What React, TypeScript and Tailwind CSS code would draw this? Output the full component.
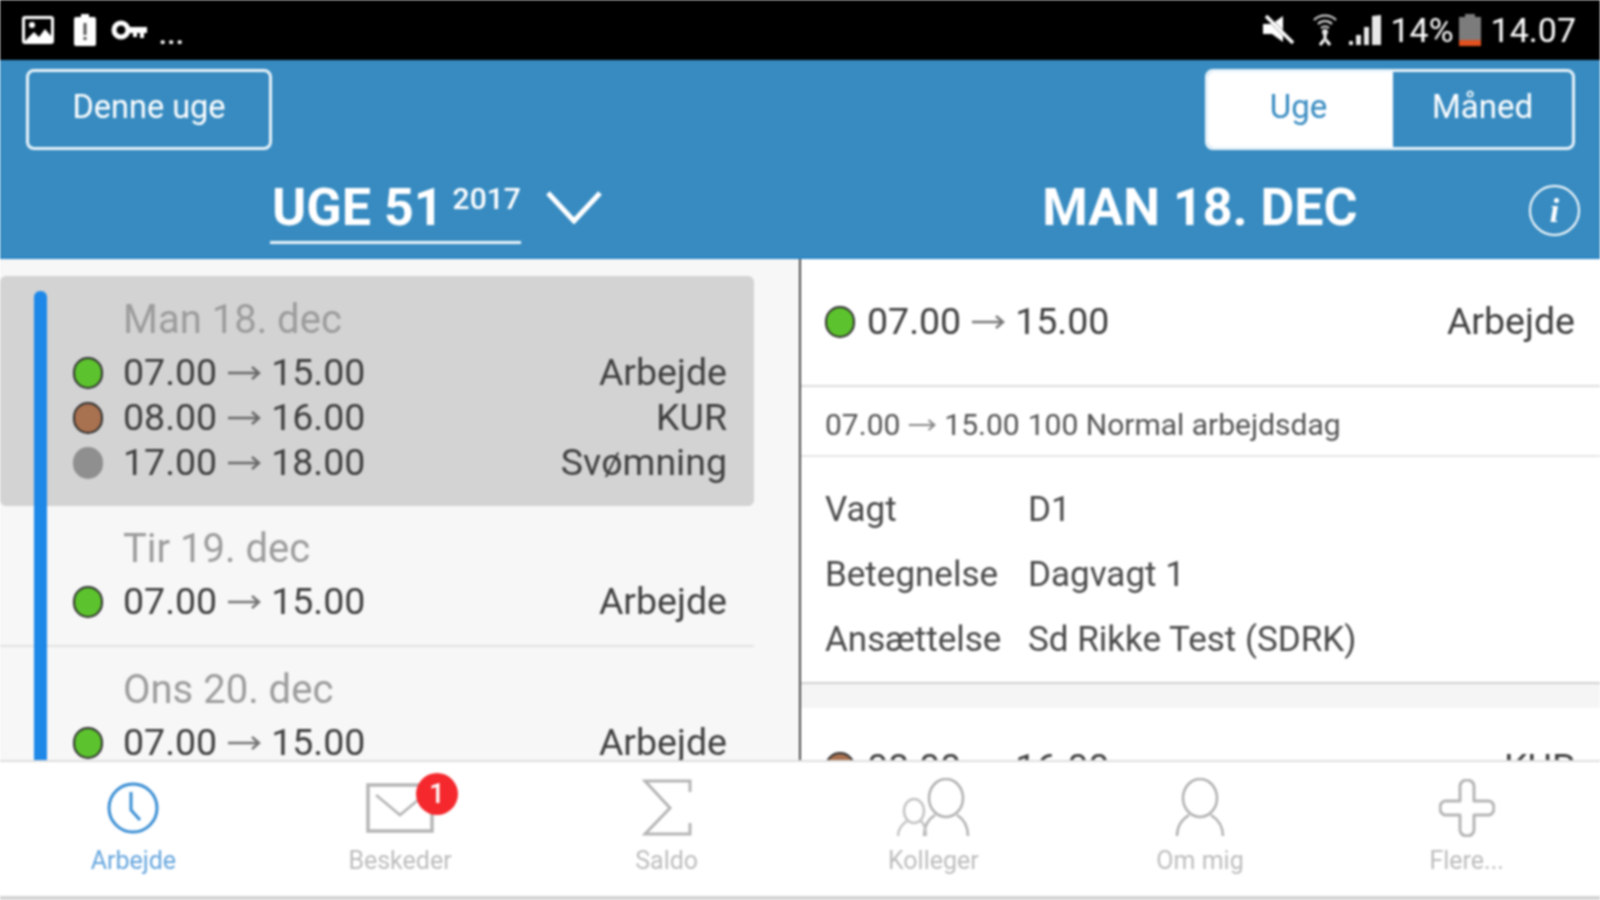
import type { ReactNode } from "react";

function Arrow({ w = 34 }: { w?: number }) {
  return (
    <svg width={w} height="18" viewBox="0 0 34 18" fill="none" stroke="currentColor" strokeWidth="2.5" className="shrink-0 opacity-70">
      <path d="M1 9h31M25 3l7 6-7 6" />
    </svg>
  );
}

function Dot({ color, ring }: { color: string; ring?: boolean }) {
  return (
    <span
      className={`w-[30px] h-[32px] rounded-full shrink-0 ${ring ? "border-2 border-[#2f2f2f]" : ""}`}
      style={{ backgroundColor: color }}
    />
  );
}

function Shift({ dot, ring, from, to, label }: { dot: string; ring?: boolean; from: string; to: string; label: string }) {
  return (
    <div className="flex items-center h-[45px] text-[37.5px] text-[#3f3f3f] leading-none">
      <Dot color={dot} ring={ring} />
      <span className="ml-[20px] flex items-center gap-[10px]">
        {from} <Arrow /> {to}
      </span>
      <span className="ml-auto">{label}</span>
    </div>
  );
}

function Day({ title, selected, last, children }: { title: string; selected?: boolean; last?: boolean; children: ReactNode }) {
  return (
    <div
      className={`flex w-[754px] pl-[34px] ${
        selected ? "bg-[#d3d3d3] rounded-md pt-[15px]" : last ? "" : "border-b-2 border-[#e2e2e2]"
      }`}
    >
      <div className={`w-[13px] bg-[#1e88e8] shrink-0 ${selected ? "rounded-t-md" : last ? "" : "-mb-[2px] relative"}`} />
      <div className="flex-1 pl-[26px] pr-[27px] pb-[21px]">
        <div className={`pl-[50px] text-[40px] text-[#9c9c9c] leading-none ${selected ? "pt-[9px] pb-[10px]" : "pt-[23px] pb-[10px]"}`}>
          {title}
        </div>
        {children}
      </div>
    </div>
  );
}

function Field({ name, value }: { name: string; value: string }) {
  return (
    <div className="flex items-center h-[65px] text-[35px] text-[#4a4a4a] leading-none">
      <span className="w-[203px]">{name}</span>
      <span>{value}</span>
    </div>
  );
}

function Tab({ label, active, children }: { label: string; active?: boolean; children: ReactNode }) {
  return (
    <div className="flex-1 flex flex-col items-center">
      <div className="relative h-[64px] flex items-center justify-center">{children}</div>
      <span className={`mt-[8px] text-[25px] leading-none ${active ? "text-[#66a6de]" : "text-[#bdbdbd]"}`}>{label}</span>
    </div>
  );
}

export default function App() {
  return (
    <div className="w-[1600px] h-[900px] overflow-hidden flex flex-col bg-white font-['Roboto',sans-serif] blur-[0.8px]">
      {/* status bar */}
      <div className="h-[60px] bg-black flex items-center pl-[22px] pr-[24px] text-white shrink-0">
        <svg width="32" height="28" viewBox="0 0 32 28" className="mr-[20px]">
          <rect x="0" y="0" width="32" height="28" rx="3" fill="#fff" />
          <rect x="3" y="3" width="26" height="22" fill="#000" />
          <circle cx="10" cy="9" r="3" fill="#fff" />
          <path d="M3 25l9-9 5 5 6-8 6 7v5z" fill="#fff" />
        </svg>
        <svg width="22" height="32" viewBox="0 0 22 32" className="mr-[15px]">
          <path d="M7 0h8v3h5a2 2 0 0 1 2 2v25a2 2 0 0 1-2 2H2a2 2 0 0 1-2-2V5a2 2 0 0 1 2-2h5z" fill="#fff" />
          <rect x="9.5" y="9" width="3" height="12" fill="#555" />
          <rect x="9.5" y="23" width="3" height="3" fill="#555" />
        </svg>
        <svg width="36" height="20" viewBox="0 0 36 20" className="mr-[12px]">
          <circle cx="10" cy="10" r="7" fill="none" stroke="#fff" strokeWidth="5" />
          <path d="M17 7h19v6h-3v5h-4v-5h-3v4h-4v-4h-5z" fill="#fff" />
        </svg>
        <span className="text-[26px] leading-none mt-[10px] font-bold tracking-[1px]">...</span>
        <div className="ml-auto flex items-center">
          <svg width="34" height="30" viewBox="0 0 34 30" className="mr-[17px]">
            <path d="M1 9h9l11-8v26L10 19H1z" fill="#fff" />
            <path d="M4 1l27 27" stroke="#000" strokeWidth="4" />
            <path d="M4 1l27 27" stroke="#fff" strokeWidth="3.5" />
          </svg>
          <svg width="24" height="32" viewBox="0 0 24 32" fill="none" stroke="#ddd" strokeWidth="2" className="mr-[11px]">
            <path d="M1 6c6-6 16-6 22 0M5 10c4-4 10-4 14 0M8 14c2-2 6-2 8 0" />
            <circle cx="12" cy="18" r="2" fill="#fff" />
            <path d="M12 20v6M7 31l4-5M17 31l-4-5" strokeWidth="3" stroke="#fff" />
          </svg>
          <svg width="34" height="30" viewBox="0 0 34 30" className="mr-[8px]">
            <path d="M1 30v-4h4v4zM8 30V20h5v10zM16 30V12h5v18zM24 30V1l9-1v30z" fill="#e8e8e8" />
          </svg>
          <span className="text-[34px] leading-none mr-[5px]">14%</span>
          <svg width="22" height="32" viewBox="0 0 22 32" className="mr-[10px]">
            <path d="M6 0h10v3h6v29H0V3h6z" fill="#7c7c7c" />
            <rect x="0" y="26" width="22" height="6" fill="#e2501f" />
          </svg>
          <span className="text-[34px] leading-none">14.07</span>
        </div>
      </div>

      {/* header */}
      <div className="h-[199px] bg-[#378bc1] border-b-2 border-[#2b85c4] shrink-0 text-white">
        <div className="flex justify-between pl-[26px] pr-[25px] pt-[9px]">
          <div className="w-[246px] h-[81px] border-[3px] border-[#e8f3fa] rounded-lg flex items-center justify-center text-[32.5px] pb-[5px]">
            Denne uge
          </div>
          <div className="flex w-[370px] h-[81px] border-[3px] border-[#e8f3fa] rounded-lg overflow-hidden text-[33px]">
            <div className="w-[185px] bg-white text-[#378bc1] flex items-center justify-center pb-[5px] pr-[4px]">Uge</div>
            <div className="flex-1 flex items-center justify-center pb-[5px]">Måned</div>
          </div>
        </div>
        <div className="flex mt-[30px]">
          <div className="w-[800px] pl-[270px] flex items-start">
            <div className="w-[251px] h-[64px] border-b-[3px] border-[#e8f3fa] flex items-start pl-[2px] pt-[2px]">
              <span className="text-[52px] font-bold leading-none whitespace-nowrap shrink-0">UGE 51</span>
              <span className="text-[30px] font-medium leading-none ml-[9px] mt-[2px]">2017</span>
            </div>
            <svg width="56" height="34" viewBox="0 0 56 34" fill="none" stroke="#fff" strokeWidth="5" className="ml-[25px] mt-[10px]">
              <path d="M2 3l26 28L54 3" />
            </svg>
          </div>
          <div className="flex-1 grid grid-cols-[1fr_auto_1fr] items-center px-[20px] h-[48px]">
            <span />
            <span className="text-[52px] font-bold leading-none">MAN 18. DEC</span>
            <span className="justify-self-end w-[51px] h-[51px] mt-[5px] rounded-full border-2 border-white flex items-center justify-center font-['Liberation_Serif',serif] italic font-bold text-[34px] leading-none">
              i
            </span>
          </div>
        </div>
      </div>

      {/* content */}
      <div className="flex h-[501px] shrink-0 overflow-hidden">
        <div className="w-[799px] bg-[#f7f7f7] pt-[17px] overflow-hidden">
          <Day title="Man 18. dec" selected>
            <Shift dot="#5cc22d" ring from="07.00" to="15.00" label="Arbejde" />
            <Shift dot="#a8714f" ring from="08.00" to="16.00" label="KUR" />
            <Shift dot="#8f8f8f" from="17.00" to="18.00" label="Svømning" />
          </Day>
          <Day title="Tir 19. dec">
            <Shift dot="#5cc22d" ring from="07.00" to="15.00" label="Arbejde" />
          </Day>
          <Day title="Ons 20. dec" last>
            <Shift dot="#5cc22d" ring from="07.00" to="15.00" label="Arbejde" />
          </Day>
        </div>
        <div className="w-[2px] bg-[#4a4a4a] shrink-0" />
        <div className="flex-1 overflow-hidden">
          <div className="h-[128px] flex items-center pl-[24px] pr-[25px] border-b-2 border-[#dcdcdc] text-[37.5px] text-[#3f3f3f] leading-none">
            <Dot color="#5cc22d" ring />
            <span className="ml-[12px] flex items-center gap-[10px]">
              07.00 <Arrow /> 15.00
            </span>
            <span className="ml-auto">Arbejde</span>
          </div>
          <div className="h-[70px] flex items-center pl-[24px] pt-[8px] border-b-2 border-[#e6e6e6] text-[30px] text-[#555] leading-none">
            <span className="flex items-center gap-[8px]">
              07.00 <Arrow w={28} /> 15.00
            </span>
            <span className="ml-[8px]">100 Normal arbejdsdag</span>
          </div>
          <div className="pl-[24px] pt-[20px] pb-[10px] border-b-2 border-[#d2d2d2]">
            <Field name="Vagt" value="D1" />
            <Field name="Betegnelse" value="Dagvagt 1" />
            <Field name="Ansættelse" value="Sd Rikke Test (SDRK)" />
          </div>
          <div className="h-[24px] bg-[#f5f5f5]" />
          <div className="pt-[41px] pl-[24px] pr-[25px] flex items-center text-[37.5px] text-[#3f3f3f] leading-none">
            <Dot color="#a8714f" ring />
            <span className="ml-[12px] flex items-center gap-[10px]">
              08.00 <Arrow /> 16.00
            </span>
            <span className="ml-auto">KUR</span>
          </div>
        </div>
      </div>

      {/* bottom tabs */}
      <div className="flex-1 bg-white border-t-2 border-[#dedede] border-b-4 border-b-[#d4d4d4] flex pt-[14px]">
        <Tab label="Arbejde" active>
          <svg width="54" height="54" viewBox="0 0 54 54" fill="none" stroke="#3b8fd4" strokeWidth="3">
            <circle cx="27" cy="27" r="24" />
            <path d="M25 11v18l9 10" />
          </svg>
        </Tab>
        <Tab label="Beskeder">
          <svg width="68" height="50" viewBox="0 0 68 50" fill="none" stroke="#b5b5b5" strokeWidth="3.5">
            <rect x="2" y="2" width="64" height="46" />
            <path d="M10 12l24 20 24-20" strokeWidth="2.5" />
          </svg>
          <span className="absolute -top-[3px] left-[50px] w-[42px] h-[42px] rounded-full bg-[#f4282d] text-white text-[27px] font-medium flex items-center justify-center leading-none">
            1
          </span>
        </Tab>
        <Tab label="Saldo">
          <svg width="50" height="58" viewBox="0 0 50 58" fill="none" stroke="#b5b5b5" strokeWidth="3">
            <path d="M48 13V2H3l25 27L3 55h45V44" />
          </svg>
        </Tab>
        <Tab label="Kolleger">
          <svg width="74" height="60" viewBox="0 0 74 60" fill="none" stroke="#b0b0b0" strokeWidth="2.5">
            <ellipse cx="50" cy="20" rx="17" ry="19" />
            <path d="M39 37c-8 5-11 12-11 21M61 37c8 5 11 12 11 21" />
            <ellipse cx="18" cy="33" rx="10" ry="12" stroke="#c4c4c4" />
            <path d="M11 43c-6 4-9 9-9 15M25 43c3 3 5 8 5 15" stroke="#c4c4c4" />
          </svg>
        </Tab>
        <Tab label="Om mig">
          <svg width="52" height="60" viewBox="0 0 52 60" fill="none" stroke="#b0b0b0" strokeWidth="2.5">
            <ellipse cx="26" cy="20" rx="17" ry="19" />
            <path d="M15 37C7 42 3 49 3 58M37 37c8 5 12 12 12 21" />
          </svg>
        </Tab>
        <Tab label="Flere...">
          <svg width="56" height="58" viewBox="0 0 56 58" fill="none" stroke="#b5b5b5" strokeWidth="3" strokeLinejoin="round">
            <path d="M21 22V7a7 6 0 0 1 14 0v15h15a5 7 0 0 1 0 14H35v15a7 6 0 0 1-14 0V36H6a5 7 0 0 1 0-14z" />
          </svg>
        </Tab>
      </div>
    </div>
  );
}
